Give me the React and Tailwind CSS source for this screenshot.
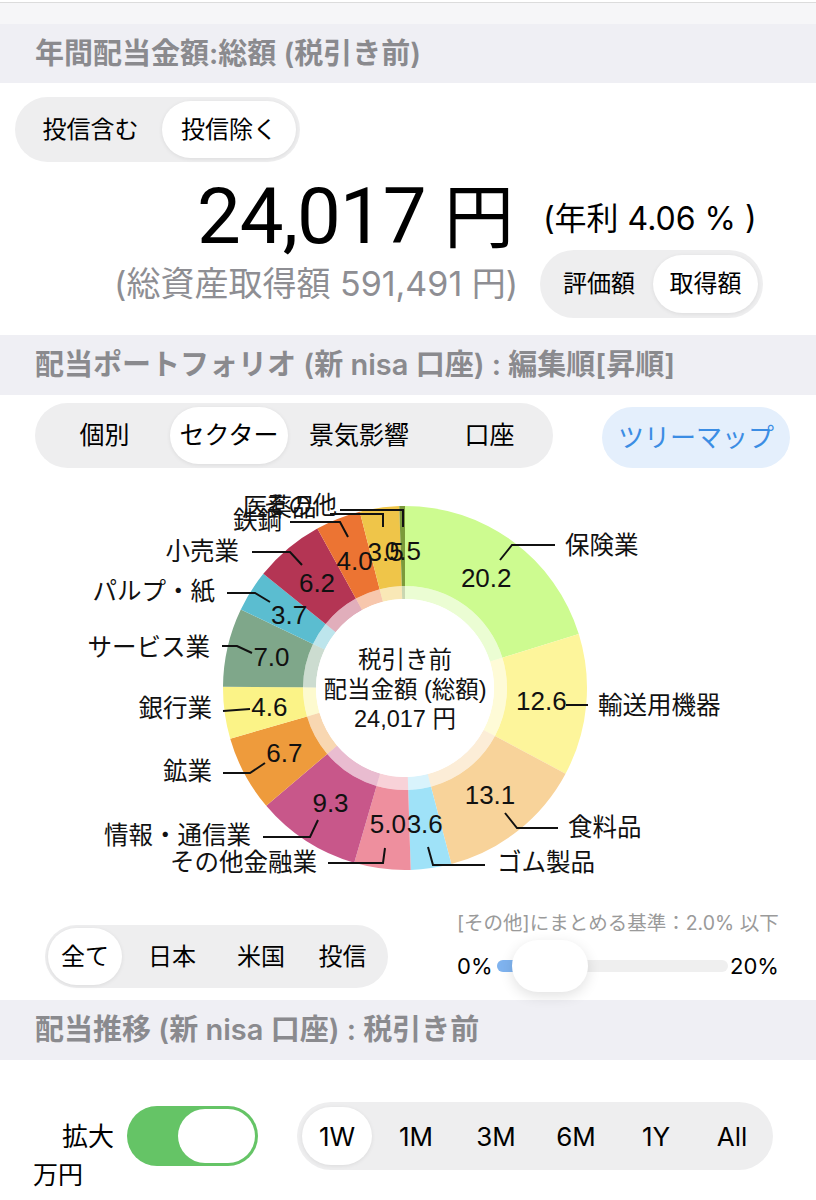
import React from 'react';

const font = "font-['Inter','Noto_Sans_CJK_JP',sans-serif]";

// sector data, clockwise from 12 o'clock
const sectors = [
    { name: '保険業', v: 20.2, c: '#cdfb90' },
    { name: '輸送用機器', v: 12.6, c: '#fdf59b' },
    { name: '食料品', v: 13.1, c: '#f8d39a' },
    { name: 'ゴム製品', v: 3.6, c: '#9fe2f8' },
    { name: 'その他金融業', v: 5.0, c: '#ee8f9e' },
    { name: '情報・通信業', v: 9.3, c: '#c8578a' },
    { name: '鉱業', v: 6.7, c: '#ee9b3c' },
    { name: '銀行業', v: 4.6, c: '#fbf387' },
    { name: 'サービス業', v: 7.0, c: '#7fa78a' },
    { name: 'パルプ・紙', v: 3.7, c: '#5bbdd0' },
    { name: '小売業', v: 6.2, c: '#b43554' },
    { name: '鉄鋼', v: 4.0, c: '#ec7433' },
    { name: '医薬品', v: 3.5, c: '#efc549' },
    { name: 'その他', v: 0.5, c: '#7b9a3b' },
];

// outside labels: page coords (chart top = 475)
const TOP = 475;
const outside = [
    { t: '保険業', x: 565, y: 545, a: 'start', pts: [[500, 560], [512, 545], [555, 545]] },
    { t: '輸送用機器', x: 598, y: 705, a: 'start', pts: [[566, 705], [588, 705]] },
    { t: '食料品', x: 568, y: 827, a: 'start', pts: [[505, 813], [517, 828], [558, 828]] },
    { t: 'ゴム製品', x: 497, y: 862, a: 'start', pts: [[428, 847], [433, 865], [485, 865]] },
    { t: 'その他金融業', x: 317, y: 862, a: 'end', pts: [[385, 848], [383, 863], [328, 863]] },
    { t: '情報・通信業', x: 251, y: 835, a: 'end', pts: [[318, 820], [310, 837], [263, 837]] },
    { t: '鉱業', x: 212, y: 771, a: 'end', pts: [[223, 773], [250, 773], [265, 763]] },
    { t: '銀行業', x: 212, y: 708, a: 'end', pts: [[223, 711], [250, 709]] },
    { t: 'サービス業', x: 210, y: 647, a: 'end', pts: [[222, 646], [237, 646], [252, 653]] },
    { t: 'パルプ・紙', x: 215, y: 591, a: 'end', pts: [[227, 593], [255, 593], [270, 602]] },
    { t: '小売業', x: 239, y: 551, a: 'end', pts: [[252, 552], [290, 552], [302, 565]] },
    { t: '鉄鋼', x: 233, y: 520, a: 'start', pts: [[290, 522], [340, 522], [348, 537]] },
    { t: '医薬品', x: 243, y: 507, a: 'start', pts: [[330, 514], [383, 514], [383, 527]] },
    { t: 'その他', x: 337, y: 505, a: 'end', pts: [[340, 510], [403, 510], [403, 527]] },
];

const CX = 405;
const CY = 688 - TOP;

const polar = (r, deg) => {
    const a = (deg * Math.PI) / 180;
    return [CX + r * Math.sin(a), CY - r * Math.cos(a)];
};

const arc = (r0, r1, a0, a1) => {
    const large = a1 - a0 > 180 ? 1 : 0;
    const [x0, y0] = polar(r1, a0);
    const [x1, y1] = polar(r1, a1);
    const [x2, y2] = polar(r0, a1);
    const [x3, y3] = polar(r0, a0);
    return `M${x0} ${y0} A${r1} ${r1} 0 ${large} 1 ${x1} ${y1} L${x2} ${y2} A${r0} ${r0} 0 ${large} 0 ${x3} ${y3} Z`;
};

const DonutChart = () => {
    let acc = 0;
    const slices = sectors.map(s => {
        const a0 = (acc / 100) * 360;
        acc += s.v;
        const a1 = (acc / 100) * 360;
        return { ...s, a0, a1, mid: (a0 + a1) / 2 };
    });

    return (
        <svg width="816" height="430" className="block font-['Liberation_Sans','Noto_Sans_CJK_JP',sans-serif]">
            {slices.map(s => (
                <g key={s.name}>
                    <path d={arc(102, 182, s.a0, s.a1)} fill={s.c} />
                    <path d={arc(89, 102, s.a0, s.a1)} fill={s.c} opacity="0.4" />
                </g>
            ))}
            <circle cx={CX} cy={CY} r="89" fill="#fff" />

            {/* leader lines */}
            {outside.map(o => (
                <polyline
                    key={o.t + 'l'}
                    points={o.pts.map(p => `${p[0]},${p[1] - TOP}`).join(' ')}
                    fill="none"
                    stroke="#111"
                    strokeWidth="2"
                />
            ))}

            {/* value labels */}
            {slices.map(s => {
                const [x, y] = polar(137, s.mid);
                return (
                    <text key={s.name + 'v'} x={x} y={y} fontSize="26" fill="#111" textAnchor="middle" dominantBaseline="central">
                        {s.v.toFixed(1)}
                    </text>
                );
            })}

            {outside.map(o => (
                <text key={o.t} x={o.x} y={o.y - TOP} fontSize="24.5" fill="#111" textAnchor={o.a} dominantBaseline="central">
                    {o.t}
                </text>
            ))}

            <text x={CX} y={660 - TOP} fontSize="23.5" fill="#111" textAnchor="middle" dominantBaseline="central">税引き前</text>
            <text x={CX} y={690 - TOP} fontSize="23.5" fill="#111" textAnchor="middle" dominantBaseline="central">配当金額 (総額)</text>
            <text x={CX} y={719 - TOP} fontSize="23.5" fill="#111" textAnchor="middle" dominantBaseline="central">24,017 円</text>
        </svg>
    );
};

const SectionHeader = ({ children, className }) => (
    <div className={`bg-[#efeff4] flex items-center pl-[35px] text-[29px] font-semibold text-[#8a8a8e] ${className}`}>
        {children}
    </div>
);

const Pill = ({ active, children, className }) => (
    <div className={`flex items-center justify-center h-full rounded-full ${active ? 'bg-white shadow-[0_1px_4px_rgba(0,0,0,0.08)]' : ''} ${className}`}>
        {children}
    </div>
);

const App = () => {
    return (
        <div className={`w-[816px] h-[1200px] bg-white text-black overflow-hidden ${font}`}>
            {/* top strip */}
            <div className="h-[3px] bg-white border-b border-[#dcdcdc]" />
            <div className="h-[21px] bg-[#f6f6f8]" />

            <SectionHeader className="h-[59px]">年間配当金額:総額 (税引き前)</SectionHeader>

            {/* totals */}
            <div className="h-[252px]">
                <div className="pt-[14px] pl-[15px]">
                    <div className="flex w-[285px] h-[65px] p-[4px] rounded-full bg-[#eeeeef] text-[24px]">
                        <Pill className="flex-1">投信含む</Pill>
                        <Pill active className="w-[134px]">投信除く</Pill>
                    </div>
                </div>

                <div className="flex items-end h-[88px] pl-[197px]">
                    <div className="font-['Roboto','Noto_Sans_CJK_JP',sans-serif] text-[78px] leading-none mb-[-6px] tracking-[-1px]">
                        24,017 <span className="text-[70px]">円</span>
                    </div>
                    <div className="ml-[30px] mb-[15px] text-[32px] leading-none whitespace-nowrap">(年利 4.06 % )</div>
                </div>

                <div className="flex items-center h-[68px]">
                    <div className="ml-[114px] w-[420px] text-[34px] text-[#8e8e93] leading-none whitespace-nowrap">
                        (総資産取得額 591,491 円)
                    </div>
                    <div className="ml-[6px] flex w-[223px] h-[68px] p-[5px] rounded-full bg-[#eeeeef] text-[24px]">
                        <Pill className="flex-1">評価額</Pill>
                        <Pill active className="w-[105px]">取得額</Pill>
                    </div>
                </div>
            </div>

            <SectionHeader className="h-[60px]">配当ポートフォリオ (新 nisa 口座) : 編集順[昇順]</SectionHeader>

            {/* chart filters */}
            <div className="h-[80px] flex items-start pt-[8px]">
                <div className="ml-[35px] flex w-[518px] h-[65px] p-[4px] rounded-full bg-[#eeeeef] text-[25px]">
                    <Pill className="w-[131px]">個別</Pill>
                    <Pill active className="w-[118px]">セクター</Pill>
                    <Pill className="w-[142px]">景気影響</Pill>
                    <Pill className="flex-1">口座</Pill>
                </div>
                <div className="ml-[49px] mt-[4px] w-[188px] h-[61px] rounded-full bg-[#e4effc] text-[#3b8de4] text-[26px] flex items-center justify-center">
                    ツリーマップ
                </div>
            </div>

            <DonutChart />

            {/* region filter + slider */}
            <div className="h-[95px] flex">
                <div className="ml-[45px] mt-[20px] flex w-[343px] h-[63px] p-[3px] rounded-full bg-[#eeeeef] text-[24px]">
                    <Pill active className="w-[74px]">全て</Pill>
                    <Pill className="w-[100px]">日本</Pill>
                    <Pill className="w-[78px]">米国</Pill>
                    <Pill className="flex-1">投信</Pill>
                </div>
                <div className="ml-[69px] w-[323px] pt-[3px]">
                    <div className="text-[19.5px] text-[#9a9a9a] leading-[30px] whitespace-nowrap">[その他]にまとめる基準：2.0% 以下</div>
                    <div className="flex items-center h-[54px] mt-[1px]">
                        <span className="text-[22px] w-[40px]">0%</span>
                        <div className="relative w-[231px] h-[12px] rounded-full bg-[#efefef]">
                            <div className="w-[18px] h-full rounded-l-full bg-[#7fb3ef]" />
                            <div className="absolute left-[15px] top-[-20px] w-[76px] h-[52px] rounded-full bg-white shadow-[0_4px_14px_rgba(0,0,0,0.12)]" />
                        </div>
                        <span className="text-[22px] ml-[2px]">20%</span>
                    </div>
                </div>
            </div>

            <SectionHeader className="h-[60px]">配当推移 (新 nisa 口座) : 税引き前</SectionHeader>

            {/* period controls */}
            <div className="pt-[42px]">
                <div className="flex items-center h-[68px]">
                    <span className="ml-[62px] text-[26px] w-[65px]">拡大</span>
                    <div className="w-[131px] h-[60px] rounded-full bg-[#65c466] p-[3px] flex justify-end">
                        <div className="w-[77px] h-full rounded-full bg-white" />
                    </div>
                    <div className="ml-[39px] flex w-[476px] h-[68px] p-[5px] rounded-full bg-[#eeeeef] text-[26px]">
                        <Pill active className="w-[70px]">1W</Pill>
                        <Pill className="w-[80px] ml-[4px]">1M</Pill>
                        <Pill className="w-[80px]">3M</Pill>
                        <Pill className="w-[80px]">6M</Pill>
                        <Pill className="w-[80px]">1Y</Pill>
                        <Pill className="flex-1">All</Pill>
                    </div>
                </div>
                <div className="ml-[33px] mt-[-12px] text-[25px] leading-[34px]">万円</div>
            </div>
        </div>
    );
};

export default App;
